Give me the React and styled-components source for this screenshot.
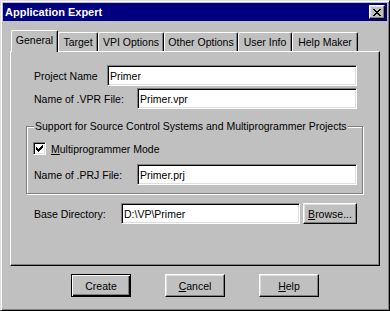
import React from "react";
import styled, { createGlobalStyle, css } from "styled-components";

const Global = createGlobalStyle`
  html, body { margin: 0; padding: 0; background: #c0c0c0; }
  body { font-family: "Liberation Sans", Arial, sans-serif; font-size: 10.5px; color: #000; }
  * { box-sizing: border-box; }
`;

const Window = styled.div`
  width: 390px;
  height: 311px;
  background: #c0c0c0;
  border: 1px solid;
  border-color: #dfdfdf #000 #000 #dfdfdf;
  box-shadow: inset 1px 1px 0 #fff, inset -1px -1px 0 #808080;
  padding: 2px;
  display: flex;
  flex-direction: column;
`;

const TitleBar = styled.div`
  height: 18px;
  background: #000080;
  color: #fff;
  display: flex;
  align-items: center;
  padding: 0 2px 0 2px;
  font-weight: bold;
  font-size: 11px;
`;

const TitleText = styled.span`
  flex: 1;
  line-height: 18px;
`;

const CloseBtn = styled.div`
  width: 16px;
  height: 14px;
  background: #c0c0c0;
  border: 1px solid;
  border-color: #fff #000 #000 #fff;
  box-shadow: inset -1px -1px 0 #808080, inset 1px 1px 0 #dfdfdf;
  display: flex;
  align-items: center;
  justify-content: center;
`;

const Body = styled.div`
  padding: 9px 7px 0 7px;
  display: flex;
  flex-direction: column;
`;

const TabStrip = styled.div`
  display: flex;
  align-items: flex-end;
  height: 21px;
  padding-left: 1px;
  position: relative;
  z-index: 1;
`;

const Tab = styled.div`
  width: ${(p) => p.$w}px;
  height: 19px;
  background: #c0c0c0;
  border-top: 1px solid #fff;
  border-left: 1px solid #fff;
  border-right: 1px solid #000;
  border-radius: 2px 2px 0 0;
  box-shadow: inset -1px 0 0 #808080;
  display: flex;
  align-items: center;
  justify-content: center;
  padding-bottom: 1px;
  ${(p) =>
    p.$active &&
    css`
      height: 22px;
      margin-bottom: -1px;
      padding-bottom: 3px;
    `}
`;

const Panel = styled.div`
  width: 370px;
  height: 215px;
  border: 1px solid;
  border-color: #fff #000 #000 #fff;
  box-shadow: inset -1px -1px 0 #808080;
  padding: 13px 16px 0 15px;
  display: flex;
  flex-direction: column;
`;

const Fields = styled.div`
  display: flex;
  flex-direction: column;
  gap: 2px;
  padding: 0 6px 0 8px;
`;

const Row = styled.div`
  display: flex;
  align-items: center;
  height: 21px;
`;

const Label = styled.span`
  width: ${(p) => p.$w}px;
  flex: none;
  white-space: nowrap;
`;

const Field = styled.input`
  flex: 1;
  min-width: 0;
  height: 21px;
  background: #fff;
  border: 1px solid;
  border-color: #808080 #fff #fff #808080;
  box-shadow: inset 1px 1px 0 #000, inset -1px -1px 0 #dfdfdf;
  font: inherit;
  color: #000;
  padding: 0 2px;
  outline: none;
`;

const Group = styled.fieldset`
  margin: 11px 0 0 0;
  padding: 9px 5px 8px 7px;
  border: 1px solid #808080;
  box-shadow: 1px 1px 0 #fff, inset 1px 1px 0 #fff;
  display: flex;
  flex-direction: column;
  gap: 9px;
  min-width: 0;
`;

const Legend = styled.legend`
  padding: 0 1px;
  margin-left: 0;
  line-height: 13px;
  background: #c0c0c0;
  white-space: nowrap;
`;

const CheckRow = styled.label`
  display: flex;
  align-items: center;
  gap: 5px;
  height: 13px;
  margin-left: -1px;
`;

const CheckBox = styled.span`
  width: 13px;
  height: 13px;
  flex: none;
  background: #fff;
  border: 1px solid;
  border-color: #808080 #fff #fff #808080;
  box-shadow: inset 1px 1px 0 #000, inset -1px -1px 0 #dfdfdf;
  display: flex;
  align-items: center;
  justify-content: center;
`;

const BaseRow = styled(Row)`
  margin-top: 9px;
  padding: 0 6px 0 8px;
  gap: 3px;
`;

const Button = styled.button`
  width: ${(p) => p.$w}px;
  height: ${(p) => p.$h || 23}px;
  flex: none;
  background: #c0c0c0;
  font: inherit;
  color: #000;
  padding: 0;
  border: 1px solid;
  border-color: #fff #000 #000 #fff;
  box-shadow: inset -1px -1px 0 #808080, inset 1px 1px 0 #dfdfdf;
  ${(p) =>
    p.$default &&
    css`
      border-color: #000;
      box-shadow: inset 1px 1px 0 #fff, inset -1px -1px 0 #000,
        inset -2px -2px 0 #808080;
    `}
`;

const ButtonBar = styled.div`
  display: flex;
  justify-content: center;
  gap: 34px;
  margin-top: 8px;
`;

function CloseGlyph() {
  const px = [
    [0, 0], [1, 0], [6, 0], [7, 0],
    [1, 1], [2, 1], [5, 1], [6, 1],
    [2, 2], [3, 2], [4, 2], [5, 2],
    [3, 3], [4, 3],
    [2, 4], [3, 4], [4, 4], [5, 4],
    [1, 5], [2, 5], [5, 5], [6, 5],
    [0, 6], [1, 6], [6, 6], [7, 6],
  ];
  return (
    <svg width="8" height="7" viewBox="0 0 8 7" shapeRendering="crispEdges">
      {px.map(([x, y]) => (
        <rect key={x + "-" + y} x={x} y={y} width="1" height="1" fill="#000" />
      ))}
    </svg>
  );
}

function CheckGlyph() {
  const rows = [
    "......X",
    ".....XX",
    "X...XXX",
    "XX.XXX.",
    "XXXXX..",
    ".XXX...",
    "..X....",
  ];
  const cells = [];
  rows.forEach((r, y) =>
    r.split("").forEach((c, x) => {
      if (c === "X") cells.push([x, y]);
    })
  );
  return (
    <svg width="7" height="7" viewBox="0 0 7 7" shapeRendering="crispEdges">
      {cells.map(([x, y]) => (
        <rect key={x + "-" + y} x={x} y={y} width="1" height="1" fill="#000" />
      ))}
    </svg>
  );
}

const tabs = [
  { label: "General", w: 47, active: true },
  { label: "Target", w: 40 },
  { label: "VPI Options", w: 66 },
  { label: "Other Options", w: 74 },
  { label: "User Info", w: 54 },
  { label: "Help Maker", w: 66 },
];

export default function App() {
  return (
    <>
      <Global />
      <Window>
        <TitleBar>
          <TitleText>Application Expert</TitleText>
          <CloseBtn>
            <CloseGlyph />
          </CloseBtn>
        </TitleBar>
        <Body>
          <TabStrip>
            {tabs.map((t) => (
              <Tab key={t.label} $w={t.w} $active={t.active}>
                {t.label}
              </Tab>
            ))}
          </TabStrip>
          <Panel>
            <Fields>
              <Row>
                <Label $w={73}>Project Name</Label>
                <Field readOnly value="Primer" />
              </Row>
              <Row>
                <Label $w={103}>Name of .VPR File:</Label>
                <Field readOnly value="Primer.vpr" />
              </Row>
            </Fields>
            <Group>
              <Legend>Support for Source Control Systems and Multiprogrammer Projects</Legend>
              <CheckRow>
                <CheckBox>
                  <CheckGlyph />
                </CheckBox>
                <span>
                  <u>M</u>ultiprogrammer Mode
                </span>
              </CheckRow>
              <Row>
                <Label $w={103}>Name of .PRJ File:</Label>
                <Field readOnly value="Primer.prj" />
              </Row>
            </Group>
            <BaseRow>
              <Label $w={84}>Base Directory:</Label>
              <Field readOnly value="D:\VP\Primer" />
              <Button $w={54} $h={21}>
                <u>B</u>rowse...
              </Button>
            </BaseRow>
          </Panel>
          <ButtonBar>
            <Button $w={60} $default>
              Create
            </Button>
            <Button $w={60}>
              <u>C</u>ancel
            </Button>
            <Button $w={60}>
              <u>H</u>elp
            </Button>
          </ButtonBar>
        </Body>
      </Window>
    </>
  );
}
